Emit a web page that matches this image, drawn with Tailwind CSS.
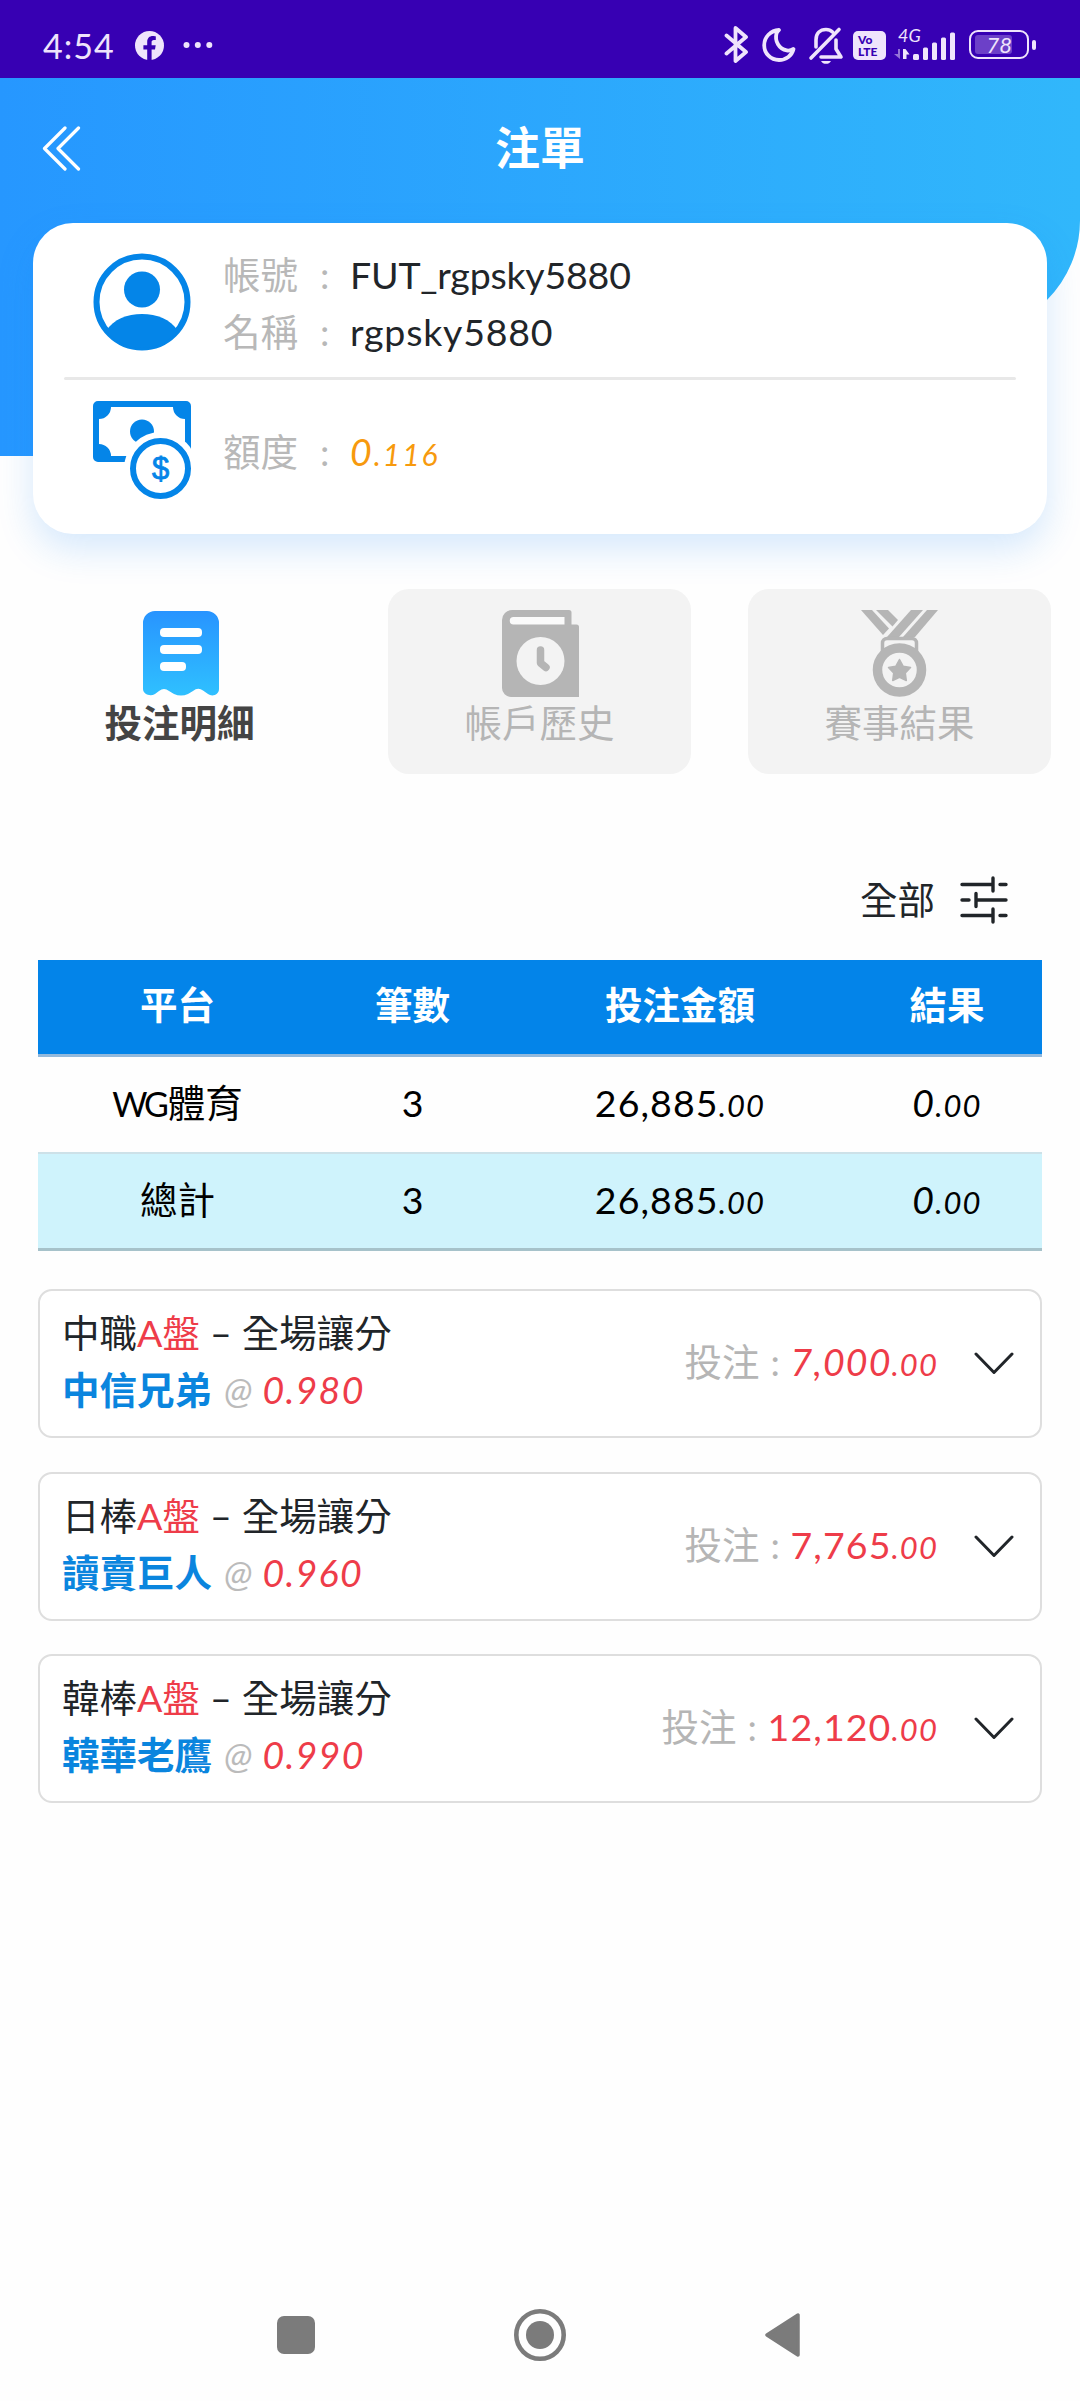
<!DOCTYPE html>
<html lang="zh-Hant">
<head>
<meta charset="utf-8">
<title>注單</title>
<script src="https://cdn.jsdelivr.net/npm/@tailwindcss/browser@4"></script>
</head>
<body class="bg-white">
<div class="relative flex h-[2401px] w-[1080px] flex-col overflow-hidden bg-[#fefefe] font-['Lato','Noto_Sans_CJK_TC',sans-serif] text-[37.5px] leading-[57px] text-[#212529]">

  <!-- Status bar -->
  <div class="flex h-[78px] shrink-0 items-start bg-[#3700b3] text-[#efe4fc]">
    <span class="ml-[43px] mt-[29px] w-[92px] text-[34px] leading-[34px] tracking-[1px]">4:54</span>
    <svg class="mt-[31px]" width="29" height="29" viewBox="0 0 29 29"><circle cx="14.5" cy="14.5" r="14.5" fill="#efe4fc"/><path d="M12.2 29V18.6H8.4v-4.3h3.8v-3.2c0-3.9 2.2-6 5.7-6 1.4 0 2.9.3 2.9.3v3.5h-1.9c-1.7 0-2.3 1-2.3 2.2v3.2h4.1l-.7 4.3h-3.4V29z" fill="#3700b3"/></svg>
    <svg class="ml-[19px] mt-[41px]" width="30" height="8" viewBox="0 0 30 8" fill="#efe4fc"><circle cx="3.5" cy="4" r="3"/><circle cx="14.8" cy="4" r="3"/><circle cx="26.3" cy="4" r="3"/></svg>
    <svg class="ml-[511px] mt-[25px]" width="25" height="39" viewBox="0 0 25 39" fill="none" stroke="#efe4fc" stroke-width="3.8" stroke-linejoin="round" stroke-linecap="round"><path d="M2.5 10.5 22 27 11.5 36V3L22 12 2.5 28.5"/></svg>
    <svg class="ml-[13px] mt-[27px]" width="34" height="36" viewBox="0 0 34 36" fill="none" stroke="#efe4fc" stroke-width="3.8" stroke-linejoin="round"><path d="M17 3C8.500 3.500 2.200 10 2.200 18.200c0 8.300 6.500 14.800 14.800 14.800 7 0 13-4.500 14.500-11-2.200 1.300-4.500 1.800-6.800 1.400C17 22.200 12.500 14 14.500 6.500 15 5 16 4 17 3z"/></svg>
    <svg class="ml-[12px] mt-[26px]" width="36" height="39" viewBox="0 0 36 39" fill="none" stroke="#efe4fc" stroke-width="3.600" stroke-linecap="round" stroke-linejoin="round"><path d="M3 32 31 3.500"/><path d="M8 21V14C8 7.500 12 3.500 18 3.500c2.500 0 5 1 6.500 2.500"/><path d="M28 14v9l5 8H13"/><path d="M13 35h10c-1 2-3 2.800-5 2.800S14 37 13 35z" fill="#efe4fc" stroke-width="0"/></svg>
    <div class="ml-[9px] mt-[31px] flex h-[29px] w-[33px] flex-col justify-center rounded-[5px] bg-[#efe4fc] pl-[5px] font-['Lato',sans-serif] text-[12px] font-black leading-[12px] text-[#3700b3]"><span>Vo</span><span>LTE</span></div>
    <div class="ml-[8px] mt-[27px] flex w-[62px] flex-col">
      <span class="ml-[4px] h-[14px] text-[18px] italic leading-[17px]">4G</span>
      <svg class="-mt-[10px]" width="62" height="30" viewBox="0 0 62 30" fill="#efe4fc"><path d="M6 18v10L0 23h4v-5z" opacity=".5"/><path d="M9 18h2.500l4 5.500h-3V28H9z"/><rect x="19" y="23" width="6" height="6" rx="1.500"/><rect x="29" y="16.500" width="5" height="12.500" rx="1.500"/><rect x="38" y="11.500" width="5" height="17.500" rx="1.500"/><rect x="47" y="6.500" width="5" height="22.500" rx="1.500"/><rect x="56" y="1.500" width="5" height="27.500" rx="1.500"/></svg>
    </div>
    <div class="ml-[13px] mt-[30px] flex h-[29px] w-[60px] items-center rounded-[9px] border-[2.500px] border-[#efe4fc] pl-[4px]">
      <div class="flex h-[19px] w-[37px] items-center justify-end rounded-[3px] bg-[#6c40c8] text-[22px] italic leading-[19px]">78</div>
    </div>
    <div class="ml-[3px] mt-[40px] h-[10px] w-[4px] rounded-[2px] bg-[#efe4fc]"></div>
  </div>

  <!-- Blue backdrop behind the account card -->
  <svg class="absolute left-0 top-[78px]" width="1080" height="378" viewBox="0 0 1080 378">
    <defs><linearGradient id="hero" x1="0" y1="0" x2="1" y2="0"><stop offset="0" stop-color="#2697ff"/><stop offset="1" stop-color="#31b7fb"/></linearGradient></defs>
    <path d="M0 0H1080V142A113 113 0 0 1 1047 222L900 378H0z" fill="url(#hero)"/>
  </svg>

  <!-- Title bar -->
  <header class="relative flex h-[145px] shrink-0 justify-center">
    <svg class="absolute left-[42px] top-[47px]" width="40" height="46" viewBox="0 0 40 46" fill="none" stroke="#fff" stroke-width="3.2" stroke-linecap="round" stroke-linejoin="round"><path d="M23 3 2.500 23.500 23 44M36.500 3 16 23.500l20.500 20.500"/></svg>
    <h1 class="mt-[42px] text-[45px] font-bold leading-[57px] text-white">注單</h1>
  </header>

  <!-- Account card -->
  <section class="relative mx-[33px] flex h-[311px] shrink-0 flex-col rounded-[40px] bg-white px-[31px] shadow-[0_15px_36px_rgba(30,135,245,0.18)]">
    <div class="flex h-[154px]">
      <svg class="ml-[29px] mt-[30px]" width="98" height="98" viewBox="0 0 98 98"><defs><clipPath id="avatar"><circle cx="49" cy="49" r="46"/></clipPath></defs><circle cx="49" cy="49" r="45.500" fill="#fff" stroke="#0485e8" stroke-width="6"/><circle cx="49" cy="36.500" r="18" fill="#0485e8"/><path clip-path="url(#avatar)" d="M13 78C21 66 34 61 49 61s28 5 36 17v20H13z" fill="#0485e8"/></svg>
      <div class="ml-[32px] mt-[23px] grid h-[114px] grid-cols-[97px_30px_1fr]">
        <span class="text-[#b8b8b8]">帳號</span><span class="text-[#b8b8b8]">:</span><span class="tracking-[-0.2px]">FUT_rgpsky5880</span>
        <span class="text-[#b8b8b8]">名稱</span><span class="text-[#b8b8b8]">:</span><span class="tracking-[0.8px]">rgpsky5880</span>
      </div>
    </div>
    <div class="h-[3px] rounded bg-[#e8e8e8]"></div>
    <div class="flex">
      <svg class="ml-[29px] mt-[21px]" width="98" height="98" viewBox="0 0 98 98">
        <path fill-rule="evenodd" fill="#0485e8" d="M5 0h88a5 5 0 0 1 5 5v51h-6V18a12 12 0 0 1-12-12H18A12 12 0 0 1 6 18V43a12 12 0 0 1 12 12H40v6H5a5 5 0 0 1-5-5V5a5 5 0 0 1 5-5z"/>
        <circle cx="49" cy="30.500" r="12" fill="#0485e8"/><circle cx="67.500" cy="67.500" r="36.500" fill="#fff"/><circle cx="67.500" cy="67.500" r="27.500" fill="none" stroke="#0485e8" stroke-width="6"/>
        <text x="67.500" y="78" text-anchor="middle" font-family="Liberation Sans" font-size="31" fill="#0485e8" stroke="#0485e8" stroke-width=".8">$</text>
      </svg>
      <div class="ml-[32px] mt-[43px] grid grid-cols-[97px_30px_1fr] text-[#b8b8b8]">
        <span>額度</span><span>:</span><span class="italic tracking-[2px] text-[#f79a0d]">0<span class="text-[30px]">.116</span></span>
      </div>
    </div>
  </section>

  <!-- Tabs -->
  <nav class="mt-[55px] flex shrink-0 gap-[57px] pl-[28px]">
    <div class="flex h-[185px] w-[303px] flex-col items-center pt-[22px]">
      <svg class="translate-x-[1px]" width="76" height="86" viewBox="0 0 76 86"><defs><linearGradient id="bill" x1="0" y1="0" x2="0" y2="1"><stop offset="0" stop-color="#2894ff"/><stop offset="1" stop-color="#2fc0ff"/></linearGradient></defs><path d="M12 0H64A12 12 0 0 1 76 12V78C76 84 69 86 65 83L60 79.500Q55 76 50 80L45 83Q38 86 31 83L26 80Q21 76 16 80L12 83C7 86 0 83 0 78V12A12 12 0 0 1 12 0z" fill="url(#bill)"/><g fill="#fff"><rect x="17" y="17" width="42" height="9" rx="4"/><rect x="17" y="34" width="42" height="9" rx="4"/><rect x="17" y="51" width="26" height="9" rx="4"/></g></svg>
      <span class="mt-[-3px] font-bold leading-[57px] text-[#444]">投注明細</span>
    </div>
    <div class="flex h-[185px] w-[303px] flex-col items-center rounded-[21px] bg-[#f3f3f3] pt-[21px] text-[#b5b5b5]">
      <svg class="translate-x-[1px]" width="77" height="87" viewBox="0 0 77 87"><path d="M10 0H67a2.500 2.500 0 0 1 2.500 2.500V14.500H74.500a2.500 2.500 0 0 1 2.500 2.500V87H9a9 9 0 0 1-9-9V10A10 10 0 0 1 10 0z" fill="#b5b5b5"/><path d="M11.500 7H62.500V14.500H11.500a3.750 3.750 0 0 1 0-7.500z" fill="#fafafa"/><circle cx="38.500" cy="51" r="24" fill="#f3f3f3"/><path d="M38.500 40V53l5.500 4.500" fill="none" stroke="#b5b5b5" stroke-width="7.500" stroke-linecap="round" stroke-linejoin="round"/></svg>
      <span class="mt-[-3px]">帳戶歷史</span>
    </div>
    <div class="flex h-[185px] w-[303px] flex-col items-center rounded-[21px] bg-[#f3f3f3] pt-[21px] text-[#b5b5b5]">
      <svg width="77" height="87" viewBox="0 0 77 87" fill="#b5b5b5"><path d="M0 0H11L28 18.500 22 25z"/><path d="M15 0H27L37 10 31.500 16.500z"/><path d="M50 0H62L38 27H26z"/><path d="M66 0H77L54 27H42z"/><path d="M21.500 43V33a4.500 4.500 0 0 1 4.500-4.500H51a4.500 4.500 0 0 1 4.500 4.500V43" fill="none" stroke="#b5b5b5" stroke-width="3.500"/><circle cx="38.500" cy="60" r="22" fill="#f3f3f3" stroke="#b5b5b5" stroke-width="9.500"/><path d="M38.500 49.500l3.600 6.700 7.400 1.400-5.200 5.400 1 7.500-6.800-3.200-6.800 3.200 1-7.500-5.200-5.400 7.400-1.400z" stroke="#b5b5b5" stroke-width="1.500" stroke-linejoin="round"/></svg>
      <span class="mt-[-3px]">賽事結果</span>
    </div>
  </nav>

  <!-- Filter -->
  <div class="mt-[97px] flex h-[57px] shrink-0 items-center justify-end gap-[25px] pr-[72px]">
    <span>全部</span>
    <svg width="48" height="48" viewBox="0 0 48 48" fill="none" stroke="#212529" stroke-width="3.400" stroke-linecap="round"><path d="M2 8.500H33M40 8.500H46M33 2V15M2 24H9M16 17.500V30.500M16 24H46M2 39.500H33M40 39.500H46M33 33V46"/></svg>
  </div>

  <!-- Summary table -->
  <div class="mx-[38px] mt-[32px] grid shrink-0 grid-cols-[279px_191px_344px_190px] text-center text-black">
    <div class="col-span-4 grid h-[97px] grid-cols-subgrid border-b-[3px] border-[#93b9dc] bg-[#0384e9] pt-[16px] font-bold text-white"><span>平台</span><span>筆數</span><span>投注金額</span><span>結果</span></div>
    <div class="col-span-4 grid h-[97px] grid-cols-subgrid border-b-[2px] border-[#cde1e8] pt-[17px]"><span><span class="text-[34px] tracking-[-3px]">WG</span><span class="ml-[2px]">體育</span></span><span>3</span><span class="tracking-[1.1px]">26,885<span class="text-[31px] italic">.00</span></span><span class="italic tracking-[1.1px]">0<span class="text-[31px]">.00</span></span></div>
    <div class="col-span-4 grid h-[97px] grid-cols-subgrid border-b-[3px] border-[#a6c2ca] bg-[#cff3fc] pt-[17px]"><span>總計</span><span>3</span><span class="tracking-[1.1px]">26,885<span class="text-[31px] italic">.00</span></span><span class="italic tracking-[1.1px]">0<span class="text-[31px]">.00</span></span></div>
  </div>

  <!-- Bets -->
  <div class="mx-[38px] mt-[38px] flex flex-col gap-[33.500px]">
    <div class="flex h-[149px] items-start rounded-[14px] border-[2.500px] border-[#dedede] bg-white pl-[22px] pr-[26px] pt-[13px]">
      <div class="flex-1">
        <p>中職<span class="text-[#ee3c49]">A盤</span><span class="ml-[10px] mr-[10px]">–</span>全場讓分</p>
        <p><b class="text-[#0a85de]">中信兄弟</b><span class="ml-[12px] text-[37px] italic text-[#bbb]">@</span><span class="ml-[10px] italic tracking-[1.3px] text-[#ee3c49]">0.980</span></p>
      </div>
      <div class="mt-[29px] flex text-[#ee3c49]"><span class="text-[#b5b5b5]">投注</span><span class="w-[31px] pl-[11px] text-[#b5b5b5]">:</span><span class="italic tracking-[1.1px]">7,000<span class="text-[31px]">.00</span></span></div>
      <svg class="ml-[36px] mt-[48px]" width="40" height="23" viewBox="0 0 40 23" fill="none" stroke="#212529" stroke-width="3" stroke-linecap="round" stroke-linejoin="round"><path d="M2 2 20 20.500 38 2"/></svg>
    </div>
    <div class="flex h-[149px] items-start rounded-[14px] border-[2.500px] border-[#dedede] bg-white pl-[22px] pr-[26px] pt-[13px]">
      <div class="flex-1">
        <p>日棒<span class="text-[#ee3c49]">A盤</span><span class="ml-[10px] mr-[10px]">–</span>全場讓分</p>
        <p><b class="text-[#0a85de]">讀賣巨人</b><span class="ml-[12px] text-[37px] italic text-[#bbb]">@</span><span class="ml-[10px] italic tracking-[1.3px] text-[#ee3c49]">0.960</span></p>
      </div>
      <div class="mt-[29px] flex text-[#ee3c49]"><span class="text-[#b5b5b5]">投注</span><span class="w-[31px] pl-[11px] text-[#b5b5b5]">:</span><span class="tracking-[1.1px]">7,765<span class="text-[31px] italic">.00</span></span></div>
      <svg class="ml-[36px] mt-[48px]" width="40" height="23" viewBox="0 0 40 23" fill="none" stroke="#212529" stroke-width="3" stroke-linecap="round" stroke-linejoin="round"><path d="M2 2 20 20.500 38 2"/></svg>
    </div>
    <div class="flex h-[149px] items-start rounded-[14px] border-[2.500px] border-[#dedede] bg-white pl-[22px] pr-[26px] pt-[13px]">
      <div class="flex-1">
        <p>韓棒<span class="text-[#ee3c49]">A盤</span><span class="ml-[10px] mr-[10px]">–</span>全場讓分</p>
        <p><b class="text-[#0a85de]">韓華老鷹</b><span class="ml-[12px] text-[37px] italic text-[#bbb]">@</span><span class="ml-[10px] italic tracking-[1.3px] text-[#ee3c49]">0.990</span></p>
      </div>
      <div class="mt-[29px] flex text-[#ee3c49]"><span class="text-[#b5b5b5]">投注</span><span class="w-[31px] pl-[11px] text-[#b5b5b5]">:</span><span class="tracking-[1.1px]">12,120<span class="text-[31px] italic">.00</span></span></div>
      <svg class="ml-[36px] mt-[48px]" width="40" height="23" viewBox="0 0 40 23" fill="none" stroke="#212529" stroke-width="3" stroke-linecap="round" stroke-linejoin="round"><path d="M2 2 20 20.500 38 2"/></svg>
    </div>
  </div>

  <!-- System navigation -->
  <div class="mt-auto flex h-[133px] shrink-0 items-center pl-[277px]">
    <div class="h-[38px] w-[38px] rounded-[7px] bg-[#7b7b7b]"></div>
    <svg class="ml-[199px]" width="52" height="52" viewBox="0 0 52 52"><circle cx="26" cy="26" r="23.700" fill="none" stroke="#7b7b7b" stroke-width="4.600"/><circle cx="26" cy="26" r="14" fill="#7b7b7b"/></svg>
    <svg class="ml-[199px]" width="35" height="44" viewBox="0 0 35 44"><path d="M2 22 33 2V42z" fill="#7b7b7b" stroke="#7b7b7b" stroke-width="3.500" stroke-linejoin="round"/></svg>
  </div>
</div>
</body>
</html>
